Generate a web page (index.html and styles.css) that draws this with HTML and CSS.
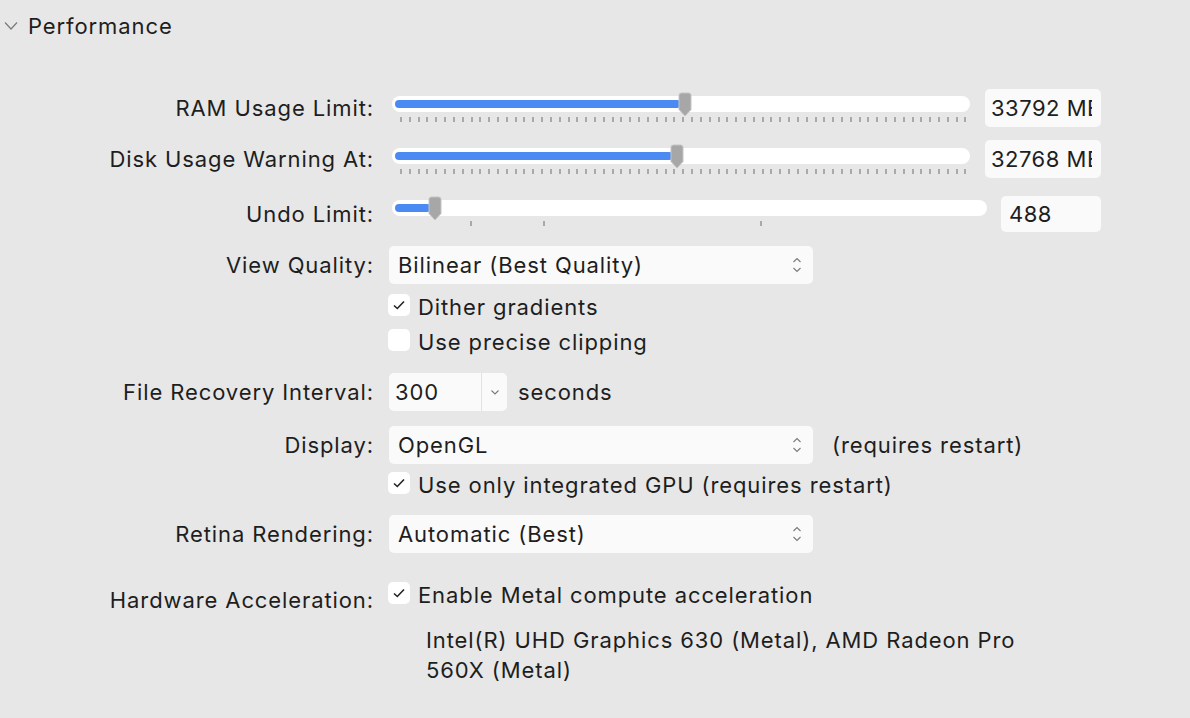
FILE: index.html
```html
<!DOCTYPE html>
<html>
<head>
<meta charset="utf-8">
<link rel="stylesheet" href="styles.css">
</head>
<body>
<div class="pane">
  <div class="header">
    <svg class="disclosure" width="14" height="10" viewBox="0 0 14 10"><path d="M1 1.5 L7 8 L13 1.5" fill="none" stroke="#7a7a7a" stroke-width="1.2"/></svg>
    <span class="title">Performance</span>
  </div>

  <div class="row row-ram">
    <div class="label">RAM Usage Limit:</div>
    <div class="ctrl slider-ctrl">
      <div class="slider s-wide">
        <div class="track"><div class="fill" style="width:286px"></div></div>
        <svg class="knob" style="left:286px" width="14" height="25" viewBox="0 0 14 25"><path d="M1 3.5 Q1 1 3.5 1 H10.5 Q13 1 13 3.5 V17.5 L7 24 L1 17.5 Z" fill="#a7a7a7" stroke="#c4c4c4" stroke-width="1"/></svg>
        <div class="ticks dense"></div>
      </div>
      <div class="field f-mb"><div class="clip">33792 MB</div></div>
    </div>
  </div>

  <div class="row row-disk">
    <div class="label">Disk Usage Warning At:</div>
    <div class="ctrl slider-ctrl">
      <div class="slider s-wide">
        <div class="track"><div class="fill" style="width:278px"></div></div>
        <svg class="knob" style="left:278px" width="14" height="25" viewBox="0 0 14 25"><path d="M1 3.5 Q1 1 3.5 1 H10.5 Q13 1 13 3.5 V17.5 L7 24 L1 17.5 Z" fill="#a7a7a7" stroke="#c4c4c4" stroke-width="1"/></svg>
        <div class="ticks dense"></div>
      </div>
      <div class="field f-mb"><div class="clip">32768 MB</div></div>
    </div>
  </div>

  <div class="row row-undo">
    <div class="label">Undo Limit:</div>
    <div class="ctrl slider-ctrl undo-ctrl">
      <div class="slider s-undo">
        <div class="track"><div class="fill" style="width:36px"></div></div>
        <svg class="knob" style="left:36px" width="14" height="25" viewBox="0 0 14 25"><path d="M1 3.5 Q1 1 3.5 1 H10.5 Q13 1 13 3.5 V17.5 L7 24 L1 17.5 Z" fill="#a7a7a7" stroke="#c4c4c4" stroke-width="1"/></svg>
        <div class="ticks sparse">
          <span class="tick" style="left:78px"></span>
          <span class="tick" style="left:151px"></span>
          <span class="tick" style="left:368px"></span>
        </div>
      </div>
      <div class="field f-undo"><div class="clip">488</div></div>
    </div>
  </div>

  <div class="row row-view">
    <div class="label">View Quality:</div>
    <div class="ctrl">
      <div class="popup">
        <span>Bilinear (Best Quality)</span>
        <svg class="updown" width="10" height="18" viewBox="0 0 10 18"><path d="M1.5 6 L5 2.5 L8.5 6 M1.5 12 L5 15.5 L8.5 12" fill="none" stroke="#7a7a7a" stroke-width="1.1"/></svg>
      </div>
    </div>
  </div>

  <div class="row row-cb1">
    <div class="label"></div>
    <div class="ctrl">
      <label class="check"><span class="box"><svg width="14" height="12" viewBox="0 0 14 12"><path d="M2 6.5 L5.3 9.5 L12 2.5" fill="none" stroke="#222" stroke-width="1.6"/></svg></span><span class="ctext">Dither gradients</span></label>
    </div>
  </div>

  <div class="row row-cb2">
    <div class="label"></div>
    <div class="ctrl">
      <label class="check"><span class="box"></span><span class="ctext">Use precise clipping</span></label>
    </div>
  </div>

  <div class="row row-file">
    <div class="label">File Recovery Interval:</div>
    <div class="ctrl inline">
      <div class="combo">
        <span class="combo-text">300</span>
        <span class="combo-btn"><svg width="10" height="7" viewBox="0 0 10 7"><path d="M1.5 1.5 L5 5 L8.5 1.5" fill="none" stroke="#7a7a7a" stroke-width="1.1"/></svg></span>
      </div>
      <span class="after">seconds</span>
    </div>
  </div>

  <div class="row row-display">
    <div class="label">Display:</div>
    <div class="ctrl inline">
      <div class="popup">
        <span>OpenGL</span>
        <svg class="updown" width="10" height="18" viewBox="0 0 10 18"><path d="M1.5 6 L5 2.5 L8.5 6 M1.5 12 L5 15.5 L8.5 12" fill="none" stroke="#7a7a7a" stroke-width="1.1"/></svg>
      </div>
      <span class="after">(requires restart)</span>
    </div>
  </div>

  <div class="row row-cb3">
    <div class="label"></div>
    <div class="ctrl">
      <label class="check"><span class="box"><svg width="14" height="12" viewBox="0 0 14 12"><path d="M2 6.5 L5.3 9.5 L12 2.5" fill="none" stroke="#222" stroke-width="1.6"/></svg></span><span class="ctext">Use only integrated GPU (requires restart)</span></label>
    </div>
  </div>

  <div class="row row-retina">
    <div class="label">Retina Rendering:</div>
    <div class="ctrl">
      <div class="popup">
        <span>Automatic (Best)</span>
        <svg class="updown" width="10" height="18" viewBox="0 0 10 18"><path d="M1.5 6 L5 2.5 L8.5 6 M1.5 12 L5 15.5 L8.5 12" fill="none" stroke="#7a7a7a" stroke-width="1.1"/></svg>
      </div>
    </div>
  </div>

  <div class="row row-hw">
    <div class="label hw-label">Hardware Acceleration:</div>
    <div class="ctrl">
      <label class="check"><span class="box"><svg width="14" height="12" viewBox="0 0 14 12"><path d="M2 6.5 L5.3 9.5 L12 2.5" fill="none" stroke="#222" stroke-width="1.6"/></svg></span><span class="ctext">Enable Metal compute acceleration</span></label>
      <div class="gpu-info">Intel(R) UHD Graphics 630 (Metal), AMD Radeon Pro 560X (Metal)</div>
    </div>
  </div>
</div>
</body>
</html>
```

FILE: styles.css
```css
html, body {
  margin: 0;
  padding: 0;
  background: #e7e7e7;
}
body {
  width: 1190px;
  height: 718px;
  overflow: hidden;
  font-family: Inter, "Noto Sans", sans-serif;
  color: #1e1e1e;
  font-size: 22px;
  letter-spacing: 0.9px;
}
.pane {
  display: flex;
  flex-direction: column;
}
.header {
  display: flex;
  align-items: center;
  height: 26px;
  margin-top: 13px;
  margin-bottom: 50px;
}
.disclosure {
  margin-left: 4px;
  margin-right: 10px;
}
.title {
  font-size: 22px;
  line-height: 26px;
}
.row {
  display: grid;
  grid-template-columns: 373px 712px;
  column-gap: 16px;
  align-items: start;
}
.label {
  text-align: right;
  line-height: 38px;
  white-space: nowrap;
  margin-right: -1px;
}
.ctrl {
  min-width: 0;
}
.slider-ctrl {
  display: flex;
  align-items: flex-start;
  gap: 15px;
}
.undo-ctrl {
  gap: 14px;
}
.slider {
  position: relative;
  margin-left: 3px;
  margin-top: 7px;
}
.s-wide { width: 578px; }
.s-undo { width: 595px; margin-top: 4px; }
.row-disk .slider { margin-top: 8px; }
.track {
  height: 16px;
  background: #ffffff;
  border-radius: 8px;
  padding: 4px 3px;
  box-sizing: border-box;
}
.fill {
  height: 8px;
  background: #4b8af2;
  border-radius: 4px;
}
.knob {
  position: absolute;
  top: -4px;
}
.ticks {
  height: 5px;
  margin-top: 5px;
  position: relative;
}
.ticks.dense {
  margin-left: 8px;
  width: 566px;
  background: repeating-linear-gradient(to right, #a9a9a9 0 2px, transparent 2px 8.82px);
}
.ticks.sparse .tick {
  position: absolute;
  top: 0;
  width: 2px;
  height: 5px;
  background: #a9a9a9;
}
.field {
  background: #fafafa;
  border-radius: 5px;
  box-sizing: border-box;
  padding: 0 6px;
  line-height: 38px;
  height: 38px;
  letter-spacing: 0.5px;
}
.field .clip {
  overflow: hidden;
  white-space: nowrap;
}
.f-mb { width: 116px; padding-right: 9px; }
.f-undo { width: 100px; height: 36px; line-height: 37px; padding-left: 8px; }
.row-ram { height: 38px; }
.row-disk { margin-top: 13px; height: 38px; }
.row-undo { margin-top: 18px; height: 36px; }
.row-undo .label { line-height: 36px; }
.row-view { margin-top: 14px; }
.popup {
  width: 424px;
  height: 38px;
  background: #fafafa;
  border-radius: 5px;
  box-sizing: border-box;
  padding: 0 10px 0 9px;
  display: flex;
  align-items: center;
  justify-content: space-between;
}
.updown { margin-right: 1px; }
.row-cb1 { margin-top: 9px; }
.row-cb2 { margin-top: 11px; }
.row-cb1 .label, .row-cb2 .label, .row-cb3 .label { line-height: 24px; }
.check {
  display: flex;
  align-items: center;
  height: 24px;
  gap: 8px;
  white-space: nowrap;
  margin-left: -1px;
}
.ctext {
  position: relative;
  top: 2px;
}
.box {
  width: 22px;
  height: 22px;
  background: #ffffff;
  border-radius: 5px;
  display: flex;
  align-items: center;
  justify-content: center;
}
.row-file { margin-top: 21px; }
.inline {
  display: flex;
  align-items: center;
  height: 38px;
}
.combo {
  display: flex;
  width: 118px;
  height: 38px;
  background: #fafafa;
  border-radius: 5px;
  box-sizing: border-box;
}
.combo-text {
  width: 93px;
  padding-left: 6px;
  line-height: 38px;
  border-right: 1px solid #e3e3e3;
  box-sizing: border-box;
}
.combo-btn {
  flex: 1;
  display: flex;
  align-items: center;
  justify-content: center;
}
.after { margin-left: 11px; }
.row-display { margin-top: 15px; }
.row-display .after { margin-left: 19px; }
.row-cb3 { margin-top: 7px; }
.row-retina { margin-top: 20px; }
.row-hw { margin-top: 28px; }
.hw-label { line-height: 24px; padding-top: 7px; }
.gpu-info {
  margin-top: 20px;
  margin-left: 37px;
  width: 610px;
  line-height: 30px;
}
```
